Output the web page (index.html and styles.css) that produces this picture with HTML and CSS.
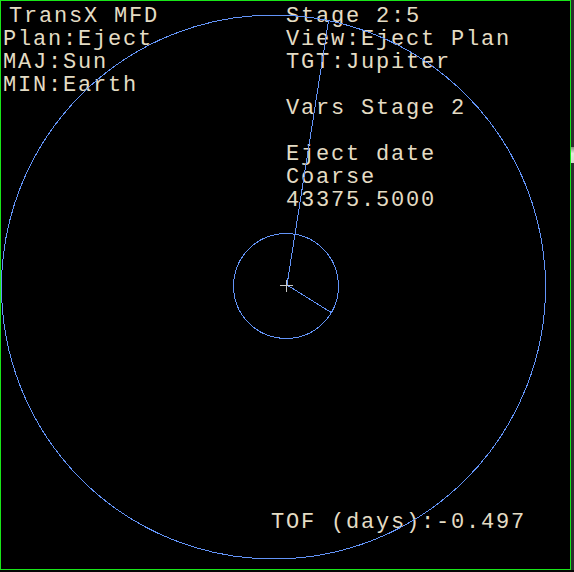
FILE: index.html
```html
<!DOCTYPE html>
<html>
<head>
<meta charset="utf-8">
<link rel="stylesheet" href="styles.css">
</head>
<body>
<div class="screen">
  <div class="mfd">
    <div class="cols">
      <div class="col left">
        <div class="title">TransX MFD</div>
        <div>Plan:Eject</div>
        <div>MAJ:Sun</div>
        <div>MIN:Earth</div>
      </div>
      <div class="col right">
        <div>Stage 2:5</div>
        <div>View:Eject Plan</div>
        <div>TGT:Jupiter</div>
        <div class="blank"></div>
        <div>Vars Stage 2</div>
        <div class="blank"></div>
        <div>Eject date</div>
        <div>Coarse</div>
        <div>43375.5000</div>
      </div>
    </div>
    <div class="tof">TOF (days):-0.497</div>
    <svg class="plot" width="571" height="570" viewBox="0 0 571 570">
      <g fill="none" stroke="#6394f8" stroke-width="1" shape-rendering="crispEdges">
        <circle cx="273.5" cy="287" r="272"/>
        <circle cx="286" cy="286" r="52.5"/>
        <line x1="287" y1="285" x2="328.5" y2="21"/>
        <line x1="287" y1="285" x2="332" y2="313"/>
      </g>
      <g stroke="#c8c8c8" stroke-width="1" shape-rendering="crispEdges">
        <line x1="280" y1="285.5" x2="293" y2="285.5"/>
        <line x1="286.5" y1="280" x2="286.5" y2="292"/>
      </g>
    </svg>
  </div>
  <div class="edge"><div class="patch"></div></div>
</div>
</body>
</html>
```
FILE: styles.css
```css
html, body {
  margin: 0;
  padding: 0;
  background: #000;
}
.screen {
  display: flex;
  width: 574px;
  height: 572px;
  background: #050505;
}
.mfd {
  position: relative;
  box-sizing: border-box;
  width: 571px;
  height: 570px;
  border: 1px solid #19e619;
  background: #000;
  display: flex;
  flex-direction: column;
  padding: 4px 0 35px 0;
  font-family: "Liberation Mono", "DejaVu Sans Mono", monospace;
  font-size: 22px;
  letter-spacing: 1.8px;
  line-height: 23px;
  color: #e4dcc4;
}
.cols {
  display: grid;
  grid-template-columns: 284px 1fr;
}
.col div {
  height: 23px;
  white-space: nowrap;
}
.left {
  padding-left: 2px;
}
.right {
  padding-left: 1px;
}
.title {
  padding-left: 6px;
}
.tof {
  margin-top: auto;
  padding-left: 270px;
  white-space: nowrap;
}
.plot {
  position: absolute;
  left: -1px;
  top: -1px;
  pointer-events: none;
}
.edge {
  width: 3px;
  height: 570px;
  background: #2e2e2e;
  padding-top: 147px;
  box-sizing: border-box;
}
.patch {
  height: 16px;
  background: linear-gradient(#8a8a80, #e8e8dc 40%, #d8d8cc);
}
```
